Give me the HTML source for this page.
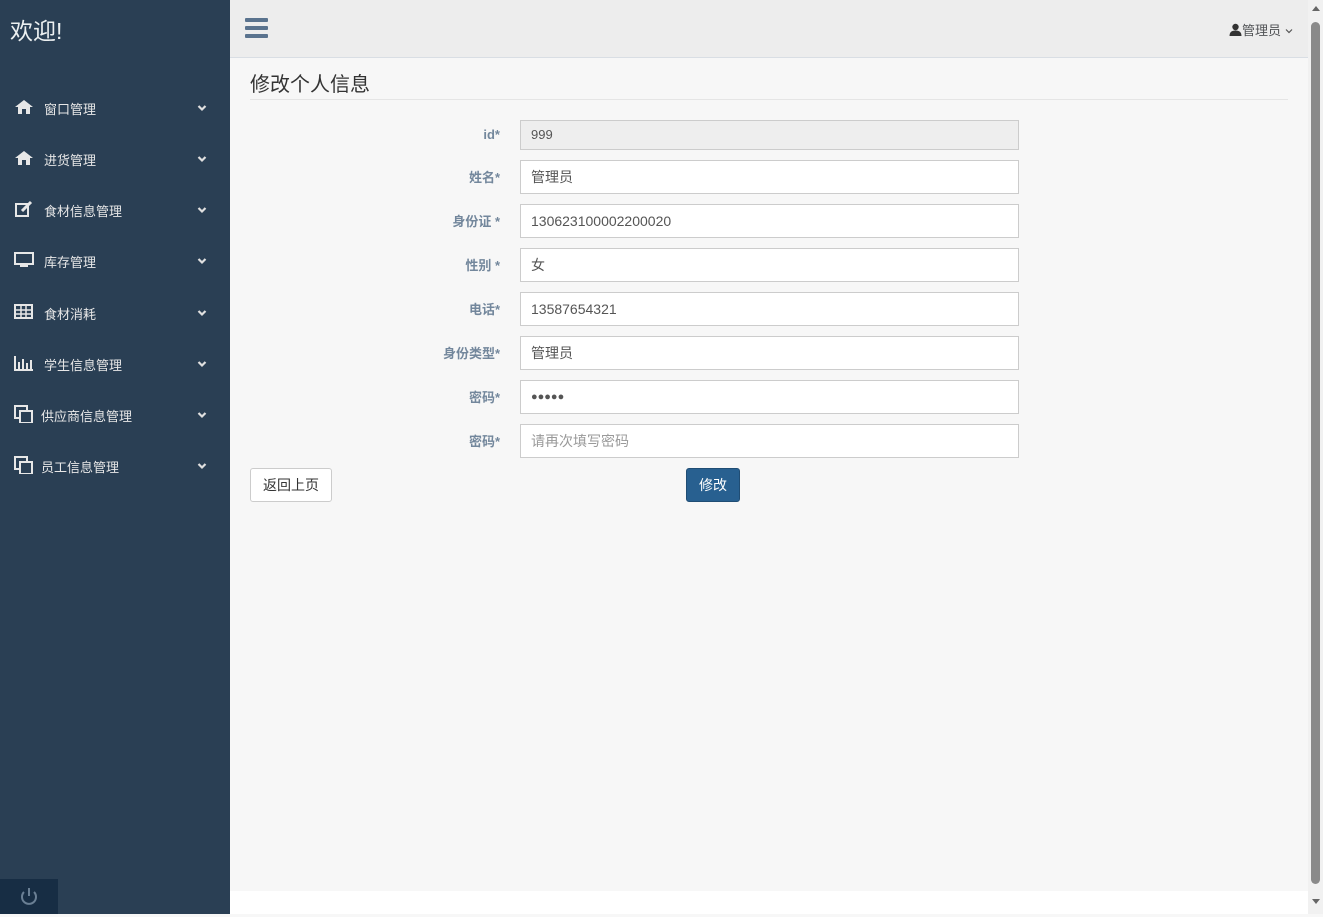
<!DOCTYPE html><html><head><meta charset="utf-8"><style>
*{box-sizing:border-box;margin:0;padding:0}
body{width:1323px;height:914px;overflow:hidden;font-family:"Liberation Sans","Noto Sans CJK SC",sans-serif;background:#f7f7f7;position:relative;font-size:13px}
.side{position:absolute;left:0;top:0;width:230px;height:914px;background:#2a3f54;color:#ececec}
.side h1{position:absolute;left:10px;top:12px;font-size:23px;font-weight:normal;color:#ecf0f1}
.item{position:absolute;left:14px;font-size:13px;color:#e7e7e7;width:200px;height:20px}
.item .ic{position:absolute;left:0;top:-2px;width:20px;height:18px}
.item .t{position:absolute;left:30px;top:-1px}
.item .ch{position:absolute;left:183px;top:4px}
.power{position:absolute;left:0;top:879px;width:58px;height:35px;background:#172d44}
.top{position:absolute;left:230px;top:0;width:1078px;height:58px;background:#ededed;border-bottom:1px solid #d9dee4}
.foot{position:absolute;left:230px;top:891px;width:1078px;height:23px;background:#fff}
.scroll{position:absolute;left:1308px;top:0;width:15px;height:914px;background:#f1f1f1}
.thumb{position:absolute;left:3px;top:22px;width:9px;height:862px;background:#8a8a8a;border-radius:5px}
h2{position:absolute;left:250px;top:68px;font-size:20px;font-weight:normal;color:#333}
.hr{position:absolute;left:250px;top:99px;width:1038px;height:1px;background:#e5e5e5}
.lab{position:absolute;right:823px;font-weight:bold;color:#73879c;font-size:13px}
.inp{position:absolute;left:520px;width:499px;height:34px;border:1px solid #ccc;background:#fff;padding:0 10px;line-height:32px;font-size:14px;color:#555}
.btn{position:absolute;top:468px;height:34px;line-height:32px;font-size:14px;text-align:center;border-radius:3px}
</style></head><body>
<svg width="0" height="0" style="position:absolute"><defs><symbol id="ch" viewBox="0 0 10 8"><path d="M1.5 2 L5 5.5 L8.5 2" fill="none" stroke="#e0e0e0" stroke-width="2.2"/></symbol></defs></svg>
<div class="side"><h1>欢迎!</h1>
<div class="item" style="top:100px"><svg class="ic" viewBox="0 0 20 18"><path d="M1 9 L10 2 L19 9 L16 9 L16 16 L12 16 L12 11 L8 11 L8 16 L4 16 L4 9Z" fill="#e7e7e7"/></svg><span class="t">窗口管理</span><svg class="ch" width="10" height="8"><use href="#ch"/></svg></div>
<div class="item" style="top:151px"><svg class="ic" viewBox="0 0 20 18"><path d="M1 9 L10 2 L19 9 L16 9 L16 16 L12 16 L12 11 L8 11 L8 16 L4 16 L4 9Z" fill="#e7e7e7"/></svg><span class="t">进货管理</span><svg class="ch" width="10" height="8"><use href="#ch"/></svg></div>
<div class="item" style="top:202px"><svg class="ic" viewBox="0 0 20 18"><rect x="2" y="4" width="12" height="12" fill="none" stroke="#e7e7e7" stroke-width="2"/><path d="M8 11 L17 2" stroke="#e7e7e7" stroke-width="3"/></svg><span class="t">食材信息管理</span><svg class="ch" width="10" height="8"><use href="#ch"/></svg></div>
<div class="item" style="top:253px"><svg class="ic" viewBox="0 0 20 18"><rect x="1" y="2" width="18" height="11" fill="none" stroke="#e7e7e7" stroke-width="2"/><rect x="6" y="14" width="8" height="2" fill="#e7e7e7"/></svg><span class="t">库存管理</span><svg class="ch" width="10" height="8"><use href="#ch"/></svg></div>
<div class="item" style="top:305px"><svg class="ic" viewBox="0 0 20 18"><rect x="1" y="2" width="17" height="13" fill="none" stroke="#e7e7e7" stroke-width="2"/><path d="M1 7H18M1 11H18M7 2V15M12 2V15" stroke="#e7e7e7" stroke-width="1.5"/></svg><span class="t">食材消耗</span><svg class="ch" width="10" height="8"><use href="#ch"/></svg></div>
<div class="item" style="top:356px"><svg class="ic" viewBox="0 0 20 18"><path d="M1 2V16H19" fill="none" stroke="#e7e7e7" stroke-width="2"/><rect x="4" y="8" width="2" height="7" fill="#e7e7e7"/><rect x="8" y="5" width="2" height="10" fill="#e7e7e7"/><rect x="12" y="9" width="2" height="6" fill="#e7e7e7"/><rect x="16" y="6" width="2" height="9" fill="#e7e7e7"/></svg><span class="t">学生信息管理</span><svg class="ch" width="10" height="8"><use href="#ch"/></svg></div>
<div class="item" style="top:407px"><svg class="ic" viewBox="0 0 20 18"><rect x="1" y="1" width="12" height="12" fill="none" stroke="#e7e7e7" stroke-width="2"/><rect x="6" y="6" width="12" height="12" fill="#2a3f54" stroke="#e7e7e7" stroke-width="2"/></svg><span class="t" style="left:27px">供应商信息管理</span><svg class="ch" width="10" height="8"><use href="#ch"/></svg></div>
<div class="item" style="top:458px"><svg class="ic" viewBox="0 0 20 18"><rect x="1" y="1" width="12" height="12" fill="none" stroke="#e7e7e7" stroke-width="2"/><rect x="6" y="6" width="12" height="12" fill="#2a3f54" stroke="#e7e7e7" stroke-width="2"/></svg><span class="t" style="left:27px">员工信息管理</span><svg class="ch" width="10" height="8"><use href="#ch"/></svg></div>
<div class="power"><svg width="58" height="35" viewBox="0 0 58 35"><path d="M24 13 A7 7 0 1 0 34 13" fill="none" stroke="#6a7f94" stroke-width="2"/><path d="M29 9V17" stroke="#6a7f94" stroke-width="2"/></svg></div>
</div>
<div class="top"><svg style="position:absolute;left:15px;top:18px" width="23" height="20"><rect y="0" width="23" height="4" rx="1" fill="#5a738e"/><rect y="8" width="23" height="4" rx="1" fill="#5a738e"/><rect y="16" width="23" height="4" rx="1" fill="#5a738e"/></svg>
<div style="position:absolute;left:999px;top:20px;color:#515356;font-size:13px;white-space:nowrap"><svg width="13" height="13" viewBox="0 0 13 13" style="vertical-align:-1px"><circle cx="6.5" cy="4" r="3.2" fill="#333"/><path d="M0.5 13 Q0.5 7.5 6.5 7.5 Q12.5 7.5 12.5 13Z" fill="#333"/></svg>管理员 <svg width="8" height="6" viewBox="0 0 8 6" style="vertical-align:1px"><path d="M1 1.5 L4 4.5 L7 1.5" fill="none" stroke="#555" stroke-width="1.2"/></svg></div></div>
<h2>修改个人信息</h2><div class="hr"></div>
<div class="lab" style="top:127px">id*</div><div class="inp" style="top:120px;height:30px;line-height:28px;background:#eee;font-size:13px">999</div>
<div class="lab" style="top:167px">姓名*</div><div class="inp" style="top:160px">管理员</div>
<div class="lab" style="top:211px">身份证 *</div><div class="inp" style="top:204px">130623100002200020</div>
<div class="lab" style="top:255px">性别 *</div><div class="inp" style="top:248px">女</div>
<div class="lab" style="top:299px">电话*</div><div class="inp" style="top:292px">13587654321</div>
<div class="lab" style="top:343px">身份类型*</div><div class="inp" style="top:336px">管理员</div>
<div class="lab" style="top:387px">密码*</div><div class="inp" style="top:380px;font-size:11px;letter-spacing:0px">●●●●●</div>
<div class="lab" style="top:431px">密码*</div><div class="inp" style="top:424px;color:#999">请再次填写密码</div>
<div class="btn" style="left:250px;width:82px;background:#fff;border:1px solid #ccc;color:#333">返回上页</div>
<div class="btn" style="left:686px;width:54px;background:#286090;border:1px solid #204d74;color:#fff">修改</div>
<div class="foot"></div>
<div class="scroll"><div style="position:absolute;left:4px;top:6px;border:4px solid transparent;border-bottom:5px solid #666;border-top:0"></div><div class="thumb"></div><div style="position:absolute;left:4px;top:899px;border:4px solid transparent;border-top:5px solid #666;border-bottom:0"></div></div>
</body></html>
